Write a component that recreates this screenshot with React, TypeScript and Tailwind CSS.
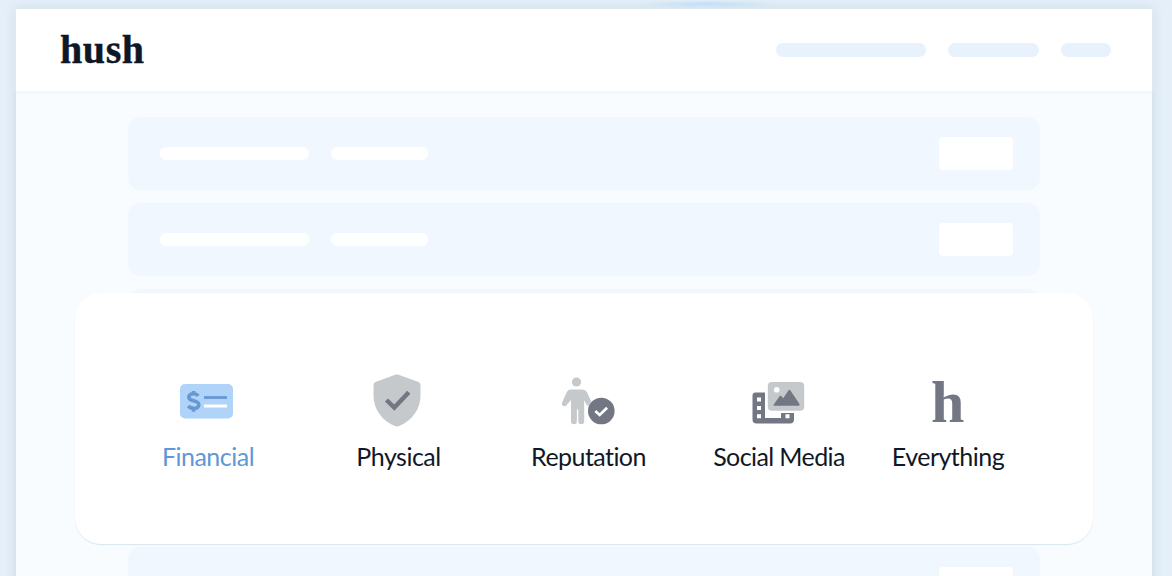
import type { ReactNode } from "react";

function FinancialIcon() {
  return (
    <svg className="relative -left-px" width="54" height="54" viewBox="0 0 54 54">
      <rect x="0" y="10" width="53" height="34.5" rx="5" fill="#b0d4f9" />
      <path
        d="M18.3 21.8c-1.2-1.4-3-2-5-2-2.6 0-4.5 1.3-4.5 3.4 0 4.9 10 2.4 10 7.6 0 2.2-2 3.6-4.9 3.6-2.4 0-4.4-.9-5.7-2.4M13.6 17v3M13.6 34.5v3.2"
        fill="none"
        stroke="#6699d0"
        strokeWidth="3.6"
      />
      <path d="M24 23.5h23" stroke="#6699d0" strokeWidth="2.8" />
      <path d="M24 32h23" stroke="#fff" strokeWidth="3" />
    </svg>
  );
}

function PhysicalIcon() {
  return (
    <svg className="relative -top-px -left-px" width="54" height="54" viewBox="0 0 54 54">
      <path
        d="M24.9 1.6q1-.4 2 0L47.5 9q2 .8 2 3v10.5c0 13-8 25-21.4 30.6q-2.1.8-4.2 0C10.5 47.5 2.500 35.500 2.500 22.500V12q0-2.200 2-3Z"
        fill="#c5c9cc"
      />
      <path
        d="m15.500 27 7.800 7.600L37.800 19.300"
        fill="none"
        stroke="#727783"
        strokeWidth="4.500"
      />
    </svg>
  );
}

function ReputationIcon() {
  return (
    <svg className="relative -left-px" width="54" height="54" viewBox="0 0 54 54">
      <circle cx="15.500" cy="8" r="4.600" fill="#c5c9cc" />
      <path
        d="M10 15.500h11c2.700 0 4.500 1.400 5.500 3.700l3.600 8-2.900 4.800c-.8-.2-1.300-.7-1.700-1.500l-2.300-4.300v21a2.700 2.700 0 0 1-5.900 0V35.500h-1.400v11.700a2.700 2.700 0 0 1-5.900 0V26L6 30.500c-1 2-2.500 2.100-3.700 1.500C.9 31.200.5 29.900 1.200 28.300l4-9.100c1-2.300 2.500-3.700 4.800-3.700Z"
        fill="#c5c9cc"
      />
      <circle cx="40.300" cy="37" r="13.300" fill="#727783" />
      <path
        d="m34.300 37 4.300 4 7.500-7.300"
        fill="none"
        stroke="#fff"
        strokeWidth="2.700"
      />
    </svg>
  );
}

function SocialIcon() {
  return (
    <svg className="relative -left-px" width="54" height="54" viewBox="0 0 54 54">
      <path
        d="M4.500 18.500h9.500v25.500h16V39h13v6.500q0 4-4 4H5.500q-4 0-4-4V21.500q0-3 3-3Z"
        fill="#727783"
      />
      <path
        d="M6 23.600h4v4H6zM6 32h4v4H6zM6 40.300h4v4H6zM34.500 40.300h4v4h-4z"
        fill="#fff"
      />
      <rect x="16.800" y="8" width="36.400" height="28.800" rx="4" fill="#c5c9cc" />
      <circle cx="25.700" cy="15.700" r="2.800" fill="#fff" />
      <path
        d="m22.400 31 6.300-9q.9-1 1.700 0l1.800 2.200 5.200-7.800q1-1.300 2 0L48.500 30q.5 1.700-1 1.700H23.500q-1.500 0-1.100-.7Z"
        fill="#727783"
      />
    </svg>
  );
}

function EverythingIcon() {
  return (
    <span className="mt-px mr-px font-['Liberation_Serif',serif] text-[60px] leading-[54px] font-bold text-[#727783]">
      h
    </span>
  );
}

interface CategoryProps {
  icon: ReactNode;
  label: string;
  className: string;
}

function Category({ icon, label, className }: CategoryProps) {
  return (
    <div className={`flex shrink-0 flex-col items-center ${className}`}>
      <div className="flex h-[54px] items-center">{icon}</div>
      <span className="mt-3 text-[25px] leading-8 whitespace-nowrap">{label}</span>
    </div>
  );
}

function PlaceholderRow() {
  return (
    <div className="flex h-[73px] shrink-0 items-center rounded-xl bg-[#f0f7fe] pr-[27px] pl-8">
      <div className="h-[13px] w-[149px] rounded-md bg-white" />
      <div className="ml-[22px] h-[13px] w-[97px] rounded-md bg-white" />
      <div className="ml-auto h-[33px] w-[74px] rounded-sm bg-white" />
    </div>
  );
}

export default function App() {
  return (
    <div className="relative h-[576px] w-[1172px] overflow-hidden bg-[#e4eff9] px-4 pt-[9px] font-[Lato,sans-serif]">
      <main className="relative h-[640px] w-[1136px] bg-[#f9fcff] shadow-[0_0_10px_1px_#cddbe1]">
        <header className="flex h-[82px] items-center bg-white pr-[41px] pl-[44px] shadow-[0_1px_4px_#e9f0f4]">
          <span className="font-['Liberation_Serif',serif] text-[40px] leading-none font-bold tracking-[0.6px] text-[#0e1726] [-webkit-text-stroke:0.4px_#0e1726]">
            hush
          </span>
          <div className="ml-auto flex gap-[22px]">
            <div className="h-[14px] w-[150px] rounded-full bg-[#e7f2fd]" />
            <div className="h-[14px] w-[91px] rounded-full bg-[#e7f2fd]" />
            <div className="h-[14px] w-[50px] rounded-full bg-[#e7f2fd]" />
          </div>
        </header>
        <div className="mx-28 flex flex-col gap-[13px] pt-[26px]">
          <PlaceholderRow />
          <PlaceholderRow />
          <PlaceholderRow />
          <PlaceholderRow />
          <PlaceholderRow />
          <PlaceholderRow />
        </div>
      </main>
      <div className="absolute top-0 left-[635px] h-[8px] w-[145px] bg-radial from-[#b9dcfb]/80 to-transparent to-70%" />
      <section className="absolute top-[293px] left-[75px] flex h-[251px] w-[1018px] rounded-[26px] bg-white pt-[81px] pl-[38px] text-[#101827] shadow-[0_1px_1px_#d9e6ef]">
        <Category
          icon={<FinancialIcon />}
          label="Financial"
          className="w-[190px] tracking-[-0.5px] text-[#6098d5]"
        />
        <Category
          icon={<PhysicalIcon />}
          label="Physical"
          className="w-[191px] tracking-[-0.5px]"
        />
        <Category
          icon={<ReputationIcon />}
          label="Reputation"
          className="w-[189px] tracking-[-0.55px]"
        />
        <Category
          icon={<SocialIcon />}
          label="Social Media"
          className="w-[192px] tracking-[-0.6px]"
        />
        <Category
          icon={<EverythingIcon />}
          label="Everything"
          className="w-[146px] tracking-[-0.5px]"
        />
      </section>
    </div>
  );
}
